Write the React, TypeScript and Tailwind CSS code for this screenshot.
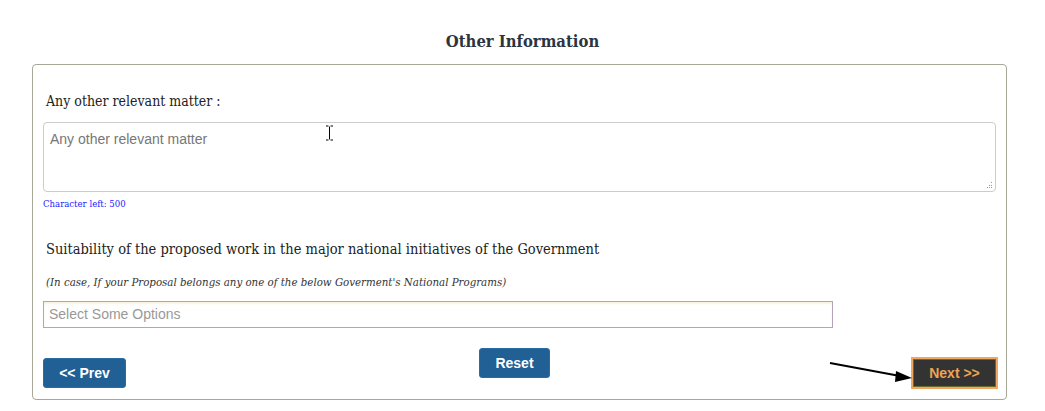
import React from 'react';

export default function App() {
  return (
    <div className="relative w-[1045px] h-[411px] bg-white overflow-hidden">
      <h2 className="h-[64px] pt-[31px] text-center text-[16.5px] leading-[22px] font-bold text-[#2c3440] font-['DejaVu_Serif_Condensed','Liberation_Serif',serif]">
        Other Information
      </h2>

      <div className="ml-[32px] w-[975px] h-[336px] rounded-[4px] border border-[#a8a898] px-[10px]">
        <label className="block mt-[26px] pl-[3px] text-[14px] leading-[20px] text-[#222] font-['DejaVu_Serif_Condensed','Liberation_Serif',serif]">
          Any other relevant matter :
        </label>
        <div className="relative mt-[11px]">
          <textarea
            placeholder="Any other relevant matter"
            className="block w-full h-[70px] resize-none rounded-[4px] border border-[#cccccc] px-[6px] py-[6px] text-[14px] leading-[20px] text-[#333] placeholder:text-[#777] outline-none font-['Liberation_Sans',Arial,sans-serif]"
          />
          <svg className="absolute right-[3px] bottom-[3px]" width="7" height="7" viewBox="0 0 7 7">
            <rect x="5" y="0" width="1" height="1" fill="#999" />
            <rect x="3" y="3" width="1" height="1" fill="#999" />
            <rect x="5" y="3" width="1" height="1" fill="#999" />
            <rect x="1" y="5" width="1" height="1" fill="#999" />
            <rect x="3" y="5" width="1" height="1" fill="#999" />
            <rect x="5" y="5" width="1" height="1" fill="#999" />
          </svg>
        </div>
        <div className="mt-[5px] text-[9.5px] leading-[14px] text-[#1a1aff] font-['DejaVu_Serif_Condensed','Liberation_Serif',serif]">
          Character left: 500
        </div>

        <label className="block mt-[28px] pl-[3px] text-[14.5px] leading-[20px] text-[#222] font-['DejaVu_Serif_Condensed','Liberation_Serif',serif]">
          Suitability of the proposed work in the major national initiatives of the Government
        </label>
        <div className="mt-[15px] pl-[3px] text-[11.4px] leading-[16px] italic text-[#333] font-['DejaVu_Serif_Condensed','Liberation_Serif',serif]">
          (In case, If your Proposal belongs any one of the below Goverment's National Programs)
        </div>
        <div className="mt-[11px] w-[790px] h-[27px] border border-[#b4a4b8] px-[5px] flex items-center text-[14px] text-[#999] shadow-[inset_0_2px_2px_rgba(240,235,200,0.6)] font-['Liberation_Sans',Arial,sans-serif]">
          Select Some Options
        </div>

        <div className="mt-[20px] flex items-start justify-between font-['Liberation_Sans',Arial,sans-serif]">
          <button className="mt-[10px] w-[83px] h-[30px] rounded-[3px] bg-[#206095] border border-[#2a6da5] text-white text-[14px] font-bold">
            &lt;&lt; Prev
          </button>
          <button className="mr-[8px] w-[71px] h-[30px] rounded-[3px] bg-[#206095] border border-[#2a6da5] text-white text-[14px] font-bold">
            Reset
          </button>
          <button className="mt-[9px] -mr-[2px] w-[87px] h-[32px] border-2 border-[#f0a860] bg-[#f0a860]">
            <span className="flex items-center justify-center w-full h-full bg-[#333333] border border-[#6b6a30] text-[#eea453] text-[14px] font-bold">
              Next &gt;&gt;
            </span>
          </button>
        </div>
      </div>

      {/* annotation arrow pointing at Next */}
      <svg className="absolute left-[828px] top-[360px]" width="86" height="24" viewBox="0 0 86 24">
        <line x1="2" y1="3" x2="72" y2="16" stroke="#000" strokeWidth="2" />
        <polygon points="84,18 68,11 67,22" fill="#000" />
      </svg>

      {/* text cursor */}
      <svg className="absolute left-[325px] top-[125px]" width="9" height="16" viewBox="0 0 9 16">
        <path d="M1 1h2.5M5.5 1H8M4.5 1.5v13M1 15h2.5M5.5 15H8" stroke="#000" strokeWidth="1" fill="none" />
      </svg>
    </div>
  );
}
